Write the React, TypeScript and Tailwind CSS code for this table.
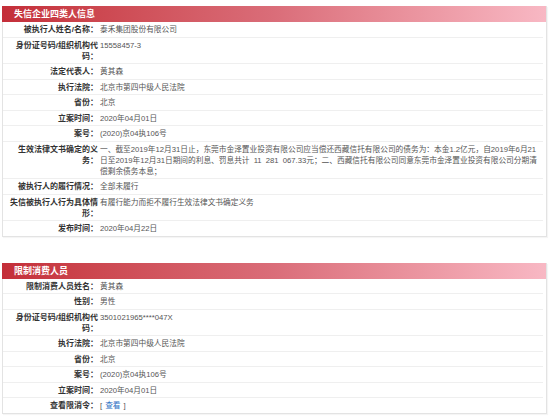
import React from "react";

type Row = { label: string; value: React.ReactNode; wide?: boolean; ws?: boolean };

const rows1: Row[] = [
  { label: "被执行人姓名/名称：", value: "泰禾集团股份有限公司" },
  { label: "身份证号码/组织机构代码：", value: "15558457-3" },
  { label: "法定代表人：", value: "黄其森" },
  { label: "执行法院：", value: "北京市第四中级人民法院" },
  { label: "省份：", value: "北京" },
  { label: "立案时间：", value: "2020年04月01日" },
  { label: "案号：", value: "(2020)京04执106号" },
  {
    label: "生效法律文书确定的义务：",
    ws: true,
    value:
      "一、截至2019年12月31日止，东莞市金泽置业投资有限公司应当偿还西藏信托有限公司的债务为：本金1.2亿元，自2019年6月21日至2019年12月31日期间的利息、罚息共计 11 281 067.33元；二、西藏信托有限公司同意东莞市金泽置业投资有限公司分期清偿剩余债务本息；",
  },
  { label: "被执行人的履行情况：", value: "全部未履行" },
  { label: "失信被执行人行为具体情形：", value: "有履行能力而拒不履行生效法律文书确定义务", wide: true },
  { label: "发布时间：", value: "2020年04月22日" },
];

const rows2: Row[] = [
  { label: "限制消费人员姓名：", value: "黄其森" },
  { label: "性别：", value: "男性" },
  { label: "身份证号码/组织机构代码：", value: "3501021965****047X" },
  { label: "执行法院：", value: "北京市第四中级人民法院" },
  { label: "省份：", value: "北京" },
  { label: "案号：", value: "(2020)京04执106号" },
  { label: "立案时间：", value: "2020年04月01日" },
  {
    label: "查看限消令：",
    value: (
      <span>
        [<span className="mx-[3px] text-[#2f6fc4]">查看</span>]
      </span>
    ),
  },
];

function Panel({ title, rows }: { title: string; rows: Row[] }) {
  return (
    <div className="w-[545px] border-x border-b border-[#e3e3e3] shadow-[1px_1px_1px_rgba(0,0,0,0.04)]">
      <div className="h-[16px] -ml-px bg-gradient-to-r from-[#c42e39] via-[#da6d79] to-[#f8b8c4] pl-[12px] text-[9px] leading-[16px] font-bold text-white">
        {title}
      </div>
      <div className="mr-[3px]">
        {rows.map((r, i) => (
          <div
            key={i}
            className={`flex pt-[2px] pb-[1.5px] ${i < rows.length - 1 ? "border-b border-[#efefef]" : ""}`}
          >
            <div className="w-[95px] shrink-0 text-right font-bold text-[8px] text-[#333]">
              {r.wide ? <div className="-ml-[8px]">{r.label}</div> : r.label}
            </div>
            <div className={`flex-1 pl-[2px] text-[7.7px] text-[#555] ${r.ws ? "[word-spacing:2px]" : ""}`}>
              {r.value}
            </div>
          </div>
        ))}
      </div>
    </div>
  );
}

export default function App() {
  return (
    <div
      className="w-[554px] h-[416px] bg-white pl-[2px] pt-[6px] leading-[11px] overflow-hidden"
      style={{ fontFamily: '"Liberation Sans", "Noto Sans CJK SC", sans-serif' }}
    >
      <Panel title="失信企业四类人信息" rows={rows1} />
      <div className="h-[26px]" />
      <Panel title="限制消费人员" rows={rows2} />
    </div>
  );
}
